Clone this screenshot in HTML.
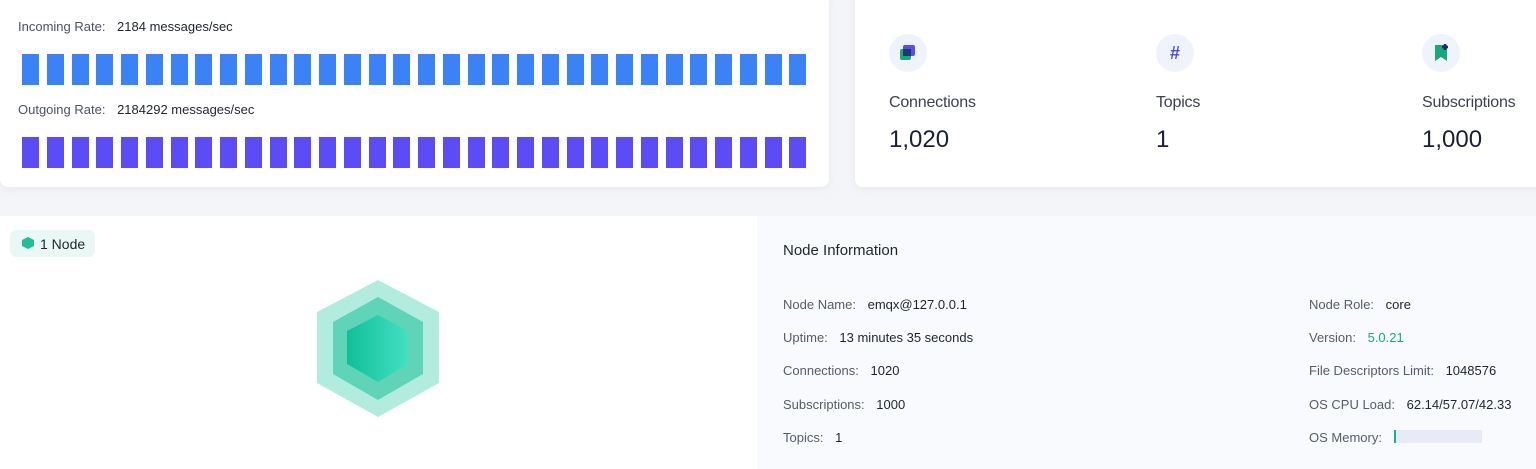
<!DOCTYPE html>
<html><head><style>
body{margin:0;width:1536px;height:469px;background:#f3f5f8;font-family:"Liberation Sans",sans-serif;position:relative;overflow:hidden;color:#1f2430}
.card{position:absolute;background:#fff;border-radius:8px;box-shadow:0 2px 10px rgba(30,40,80,.06)}
.lbl{position:absolute;font-size:13px;color:#4b5262}
.lbl b{font-weight:normal;color:#1f2430;margin-left:8px}
.bars{position:absolute;left:22px;display:flex;gap:7.75px}
.bars i{display:block;width:17px;height:31px}
.stat{position:absolute}
.ic{width:38px;height:38px;border-radius:50%;background:#eef3fc;position:relative}
.sl{font-size:16px;color:#3b4150;margin-top:22px;letter-spacing:-0.2px}
.sv{font-size:24px;color:#1a1f36;margin-top:14px}
.info{position:absolute;font-size:13px;color:#555c6b}
.info span{color:#1f2430;margin-left:8px}
</style></head><body>
<div class="card" style="left:0;top:-8px;width:829px;height:195px"></div>
<div class="lbl" style="left:18px;top:19px">Incoming Rate: <b>2184 messages/sec</b></div>
<div class="bars" style="top:54px" id="b1"></div>
<div class="lbl" style="left:18px;top:102px">Outgoing Rate: <b>2184292 messages/sec</b></div>
<div class="bars" style="top:137px" id="b2"></div>
<script>
for(const [id,c] of [["b1","#3b82f6"],["b2","#5b4cf5"]]){let h="";for(let i=0;i<32;i++)h+='<i style="background:'+c+'"></i>';document.getElementById(id).innerHTML=h;}
</script>
<div class="card" style="left:855px;top:-8px;width:700px;height:195px"></div>
<div class="stat" style="left:889px;top:34px">
<div class="ic"><div style="position:absolute;left:14px;top:11px;width:12px;height:11px;background:#5b4cf5;border-radius:2px"></div><div style="position:absolute;left:11px;top:15px;width:11px;height:11px;background:#19a77c;border-radius:2px"></div><div style="position:absolute;left:14px;top:15px;width:8px;height:7px;background:#1b3a6a"></div></div>
<div class="sl">Connections</div><div class="sv">1,020</div></div>
<div class="stat" style="left:1156px;top:34px">
<div class="ic"><div style="position:absolute;left:0;top:10px;width:38px;text-align:center;font-size:18px;font-weight:bold;color:#4a4de0;line-height:18px">#</div></div>
<div class="sl">Topics</div><div class="sv">1</div></div>
<div class="stat" style="left:1422px;top:34px">
<div class="ic"><svg width="38" height="38" style="position:absolute;left:0;top:0"><path d="M13 11h12v16l-6-4-6 4z" fill="#19a77c"/><path d="M20 13h6M23 10v6" stroke="#1b2a6a" stroke-width="2.5"/></svg></div>
<div class="sl">Subscriptions</div><div class="sv">1,000</div></div>

<div style="position:absolute;left:0;top:216px;width:757px;height:253px;background:#fff"></div>
<div style="position:absolute;left:757px;top:216px;width:779px;height:253px;background:#f8fafd"></div>
<div style="position:absolute;left:10px;top:230px;width:85px;height:27px;background:#e9f8f4;border-radius:6px"></div>
<svg style="position:absolute;left:21px;top:236px" width="14" height="14"><polygon points="7,1 13,4 13,10 7,13 1,10 1,4" fill="#1fbf9a"/></svg>
<div style="position:absolute;left:40px;top:236px;font-size:14px;color:#1f2430">1 Node</div>
<svg style="position:absolute;left:310px;top:275px" width="140" height="150">
<defs><linearGradient id="g" x1="0" x2="1"><stop offset="0" stop-color="#10bf98"/><stop offset="1" stop-color="#43e0c4"/></linearGradient></defs>
<polygon points="68,5 129,37 129,108 68,142 7,108 7,37" fill="#a8eadb" opacity=".9"/>
<polygon points="68,22 113,47 113,99 68,125 23,99 23,47" fill="#5fd4b8"/>
<polygon points="68,40 98,56 98,89 68,107 37,89 37,56" fill="url(#g)"/>
</svg>
<div style="position:absolute;left:783px;top:242px;font-size:15px;color:#1f2430">Node Information</div>
<div class="info" style="left:783px;top:297px">Node Name: <span>emqx@127.0.0.1</span></div>
<div class="info" style="left:783px;top:330px">Uptime: <span>13 minutes 35 seconds</span></div>
<div class="info" style="left:783px;top:363px">Connections: <span>1020</span></div>
<div class="info" style="left:783px;top:397px">Subscriptions: <span>1000</span></div>
<div class="info" style="left:783px;top:430px">Topics: <span>1</span></div>
<div class="info" style="left:1309px;top:297px">Node Role: <span>core</span></div>
<div class="info" style="left:1309px;top:330px">Version: <span style="color:#17a97f">5.0.21</span></div>
<div class="info" style="left:1309px;top:363px">File Descriptors Limit: <span>1048576</span></div>
<div class="info" style="left:1309px;top:397px">OS CPU Load: <span>62.14/57.07/42.33</span></div>
<div class="info" style="left:1309px;top:430px">OS Memory:</div>
<div style="position:absolute;left:1394px;top:430px;width:88px;height:13px;background:#e6ebf7"></div>
<div style="position:absolute;left:1394px;top:430px;width:2px;height:13px;background:#19b38a"></div>
</body></html>
